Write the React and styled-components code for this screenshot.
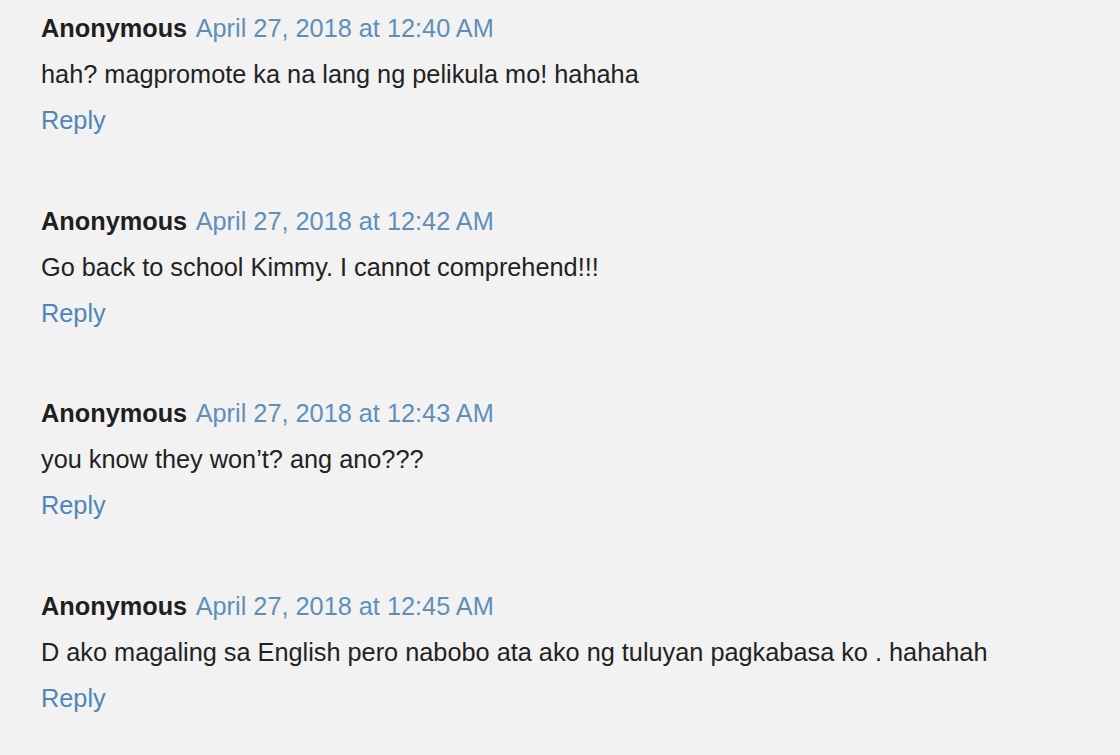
import React from "react";
import styled, { createGlobalStyle } from "styled-components";

const GlobalStyle = createGlobalStyle`
  html, body {
    margin: 0;
    padding: 0;
    background: #f2f2f2;
  }
`;

const Wrapper = styled.div`
  display: flex;
  flex-direction: column;
  width: 1120px;
  height: 755px;
  overflow: hidden;
  box-sizing: border-box;
  padding: 5px 0 0 41px;
  background: #f2f2f2;
  font-family: "Liberation Sans", Arial, sans-serif;
  font-size: 25.3px;
  line-height: 46px;
  color: #222;
`;

const Comment = styled.div`
  display: flex;
  flex-direction: column;
  margin-bottom: 54.7px;
`;

const Header = styled.div`
  white-space: nowrap;
`;

const Author = styled.span`
  font-weight: bold;
  color: #1f1f1f;
`;

const DateLink = styled.a`
  color: #5f8fb8;
  text-decoration: none;
  margin-left: 8.5px;
`;

const Body = styled.div`
  white-space: nowrap;
`;

const ReplyLink = styled.a`
  color: #4f86b8;
  text-decoration: none;
  align-self: flex-start;
`;

const comments = [
  {
    date: "April 27, 2018 at 12:40 AM",
    text: "hah? magpromote ka na lang ng pelikula mo! hahaha",
  },
  {
    date: "April 27, 2018 at 12:42 AM",
    text: "Go back to school Kimmy. I cannot comprehend!!!",
  },
  {
    date: "April 27, 2018 at 12:43 AM",
    text: "you know they won\u2019t? ang ano???",
  },
  {
    date: "April 27, 2018 at 12:45 AM",
    text: "D ako magaling sa English pero nabobo ata ako ng tuluyan pagkabasa ko . hahahah",
  },
];

export default function App() {
  return (
    <>
      <GlobalStyle />
      <Wrapper>
        {comments.map((c) => (
          <Comment key={c.date}>
            <Header>
              <Author>Anonymous</Author>
              <DateLink href="#">{c.date}</DateLink>
            </Header>
            <Body>{c.text}</Body>
            <ReplyLink href="#">Reply</ReplyLink>
          </Comment>
        ))}
      </Wrapper>
    </>
  );
}
